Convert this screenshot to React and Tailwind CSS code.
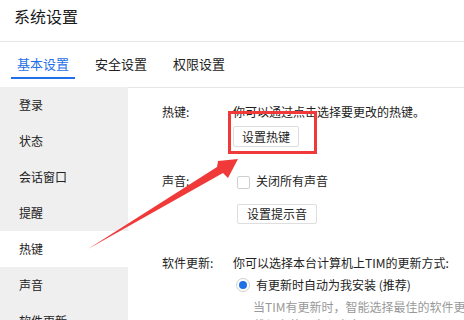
import React from "react";

const font = { fontFamily: '"Noto Sans CJK SC", "Noto Sans", sans-serif' };

export default function App() {
  const side = ["登录", "状态", "会话窗口", "提醒", "热键", "声音", "软件更新"];
  return (
    <div className="relative w-[464px] h-[320px] overflow-hidden bg-white text-[#222]" style={font}>
      <div className="h-[42px] border-b border-[#e6e6e6] pl-[14px] pt-[6px]">
        <div className="text-[16px] leading-[20px] text-[#1a1a1a]">系统设置</div>
      </div>
      <div className="h-[45px] flex items-start gap-[14px] pl-[11px]">
        <div className="px-[6px] pt-[13px] pb-[4px] border-b-[2px] border-[#1e6fe8] text-[13px] leading-[18px] text-[#1e6fe8]">基本设置</div>
        <div className="px-[6px] pt-[13px] pb-[4px] border-b-[2px] border-transparent text-[13px] leading-[18px]">安全设置</div>
        <div className="px-[6px] pt-[13px] pb-[4px] border-b-[2px] border-transparent text-[13px] leading-[18px]">权限设置</div>
      </div>
      <div className="flex">
        <div className="w-[128px] shrink-0 bg-[#efefef] flex flex-col">
          {side.map((s) => (
            <div key={s} className={"h-[36px] flex items-center pl-[19px] text-[12px] " + (s === "热键" ? "bg-white" : "")}>
              {s}
            </div>
          ))}
        </div>
        <div className="flex-1 min-w-0 overflow-hidden border-t border-[#e6e6e6] pl-[34px] pt-[15px] text-[12px] leading-[18px]">
          <div className="flex">
            <div className="w-[71px] shrink-0">热键:</div>
            <div className="flex flex-col items-start whitespace-nowrap">
              <div>你可以通过点击选择要更改的热键。</div>
              <div className="mt-[5px] h-[21px] px-[8px] border border-[#dedede] rounded-[2px] flex items-center">设置热键</div>
            </div>
          </div>
          <div className="flex mt-[25px]">
            <div className="w-[71px] shrink-0">声音:</div>
            <div className="flex flex-col items-start pl-[4px] whitespace-nowrap">
              <div className="flex items-center h-[18px]">
                <div className="w-[13px] h-[13px] border border-[#cfcfcf] rounded-[2px] bg-white mt-[3px]" />
                <div className="ml-[6px]">关闭所有声音</div>
              </div>
              <div className="mt-[14px] h-[20px] px-[9px] border border-[#dedede] rounded-[2px] flex items-center">设置提示音</div>
            </div>
          </div>
          <div className="flex mt-[30px]">
            <div className="w-[71px] shrink-0">软件更新:</div>
            <div className="flex flex-col items-start whitespace-nowrap">
              <div>你可以选择本台计算机上TIM的更新方式:</div>
              <div className="flex items-center h-[18px] mt-[4px] pl-[3px]">
                <div className="w-[14px] h-[14px] rounded-full border border-[#cfcfcf] bg-white flex items-center justify-center">
                  <div className="w-[8px] h-[8px] rounded-full bg-[#1e6fe8]" />
                </div>
                <div className="ml-[6px]">有更新时自动为我安装 (推荐)</div>
              </div>
              <div className="pl-[20px] mt-[4px] text-[#999]">当TIM有更新时，智能选择最佳的软件更新下</div>
              <div className="pl-[20px] text-[#999]">载与安装，省心省力</div>
            </div>
          </div>
        </div>
      </div>
      <div className="absolute left-[228px] top-[111px] w-[89px] h-[43px] border-[3px] border-[#f03a3a]" />
      <svg className="absolute left-0 top-0" width="464" height="320">
        <polygon
          points="88,249 223,173 228,178 238,159 218,161 217,167"
          fill="#f03a3a"
        />
      </svg>
    </div>
  );
}
